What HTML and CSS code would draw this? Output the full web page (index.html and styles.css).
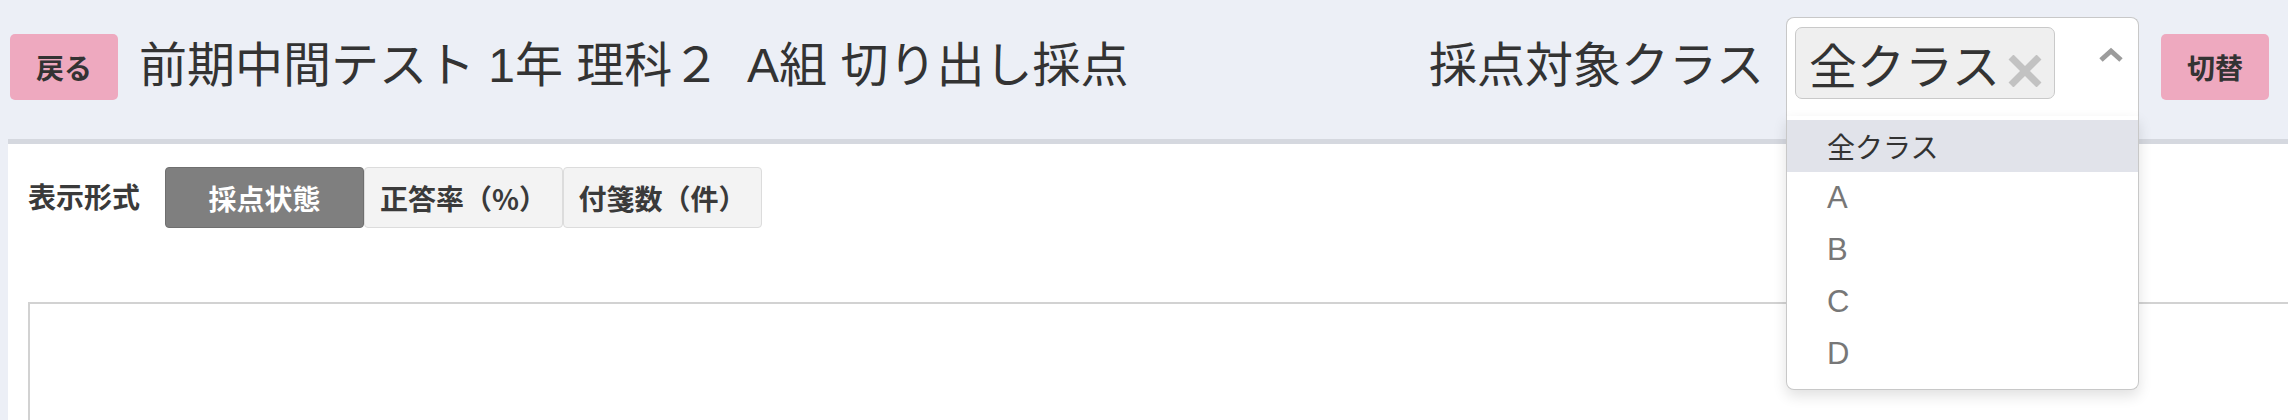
FILE: index.html
```html
<!DOCTYPE html>
<html lang="ja">
<head>
  <meta charset="UTF-8" />
  <meta name="viewport" content="width=device-width, initial-scale=1.0"/>
  <title>切り出し採点</title>
  <link rel="stylesheet" href="styles.css">
</head>
<body>
  <header class="topbar">
    <button class="btn-pink">戻る</button>
    <h1 class="title">前期中間テスト 1年 理科２&nbsp; A組 切り出し採点</h1>

    <div class="class-picker">
      <span class="picker-label">採点対象クラス</span>
      <div class="select">
        <div class="select-control">
          <span class="tag">
            全クラス
            <svg class="tag-remove" width="34" height="32" viewBox="0 0 34 32">
              <path d="M3 2 L31 30 M31 2 L3 30" stroke="#c2c2c2" stroke-width="7" fill="none"/>
            </svg>
          </span>
          <svg class="chevron" width="26" height="16" viewBox="0 0 26 16">
            <path d="M3 13 L13 4 L23 13" fill="none" stroke="#9c9c9c" stroke-width="5"/>
          </svg>
        </div>
        <ul class="select-menu">
          <li class="active">全クラス</li>
          <li>A</li>
          <li>B</li>
          <li>C</li>
          <li>D</li>
        </ul>
      </div>
      <button class="btn-pink">切替</button>
    </div>
  </header>

  <main class="panel">
    <div class="view-mode">
      <span class="view-label">表示形式</span>
      <div class="seg">
        <button class="seg-btn active">採点状態</button>
        <button class="seg-btn">正答率（%）</button>
        <button class="seg-btn">付箋数（件）</button>
      </div>
    </div>

    <div class="grid-box"></div>
  </main>
</body>
</html>
```

FILE: styles.css
```css
body {
  margin: 0;
  padding: 0;
  font-family: 'Liberation Sans', 'Noto Sans CJK JP', sans-serif;
  color: #333;
  background: #eceff6;
  overflow: hidden;
}

.topbar {
  height: 139px;
  box-sizing: border-box;
  display: flex;
  align-items: center;
  padding: 0 19px 6px 10px;
}

.btn-pink {
  width: 108px;
  height: 66px;
  border: none;
  border-radius: 5px;
  background: #eea9bf;
  color: #333;
  font-family: 'Noto Sans CJK JP', sans-serif;
  font-size: 28px;
  font-weight: 700;
  cursor: pointer;
}

.title {
  margin: 0 0 12px 21px;
  font-size: 48px;
  font-weight: 400;
  white-space: nowrap;
}

.class-picker {
  margin-left: auto;
  display: flex;
  align-items: center;
  gap: 22px;
}

.picker-label {
  font-family: 'Noto Sans CJK JP', sans-serif;
  font-size: 48px;
  margin-bottom: 12px;
}

.select {
  position: relative;
  width: 353px;
}

.select-control {
  height: 99px;
  box-sizing: border-box;
  display: flex;
  align-items: flex-start;
  padding: 9px 14px 0 8px;
  background: #fff;
  border: 1px solid #c8c8c8;
  border-bottom: none;
  border-radius: 8px 8px 0 0;
}

.tag {
  height: 72px;
  box-sizing: border-box;
  display: inline-flex;
  align-items: center;
  gap: 8px;
  padding: 0 12px 0 13px;
  background: #efefef;
  border: 1px solid #c9c9c9;
  border-radius: 7px;
  font-family: 'Noto Sans CJK JP', sans-serif;
  font-size: 48px;
}

.tag-remove {
  margin-top: 15px;
}

.chevron {
  margin-left: auto;
  margin-top: 20px;
}

.select-menu {
  position: absolute;
  top: 100%;
  left: 0;
  right: 0;
  margin: 0;
  padding: 4px 0 9px;
  list-style: none;
  background: #fff;
  border: 1px solid #c8c8c8;
  border-top: none;
  border-radius: 0 0 8px 8px;
  box-shadow: 0 6px 14px rgba(0, 0, 0, 0.12);
  z-index: 10;
}

.select-menu li {
  height: 52px;
  display: flex;
  align-items: center;
  padding-left: 40px;
  font-size: 31px;
  color: #777;
}

.select-menu li.active {
  background: #e1e3ea;
  color: #333;
  font-size: 28px;
}

.panel {
  margin-left: 8px;
  min-height: 300px;
  background: #fff;
  border-top: 5px solid #d5d8df;
  padding: 23px 0 0 20px;
}

.view-mode {
  display: flex;
  align-items: center;
  gap: 25px;
}

.view-label {
  font-family: 'Noto Sans CJK JP', sans-serif;
  font-size: 28px;
  font-weight: 700;
  color: #3a3a3a;
  margin-bottom: 4px;
}

.seg {
  display: flex;
}

.seg-btn {
  width: 199px;
  height: 61px;
  border: 1px solid #dcdcdc;
  border-radius: 4px;
  background: #f3f3f3;
  color: #3a3a3a;
  font-family: 'Noto Sans CJK JP', sans-serif;
  font-size: 28px;
  font-weight: 700;
  cursor: pointer;
}

.seg-btn.active {
  background: #7f7f7f;
  border-color: #6f6f6f;
  color: #fff;
}

.grid-box {
  margin-top: 74px;
  margin-right: -40px;
  height: 200px;
  border: 2px solid #d2d2d2;
}
```
